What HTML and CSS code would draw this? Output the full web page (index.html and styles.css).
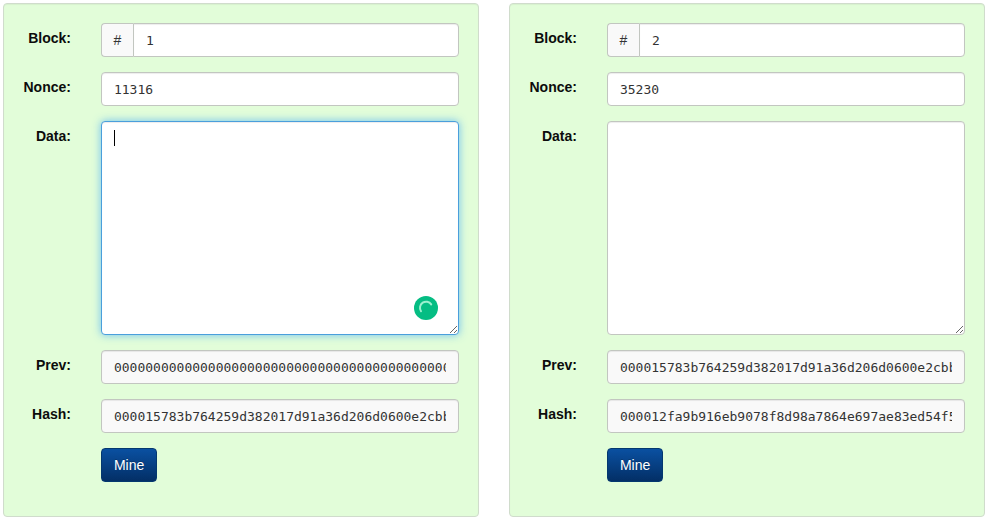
FILE: index.html
```html
<!DOCTYPE html>
<html lang="en">
<head>
  <meta charset="UTF-8">
  <meta name="viewport" content="width=device-width, initial-scale=1.0">
  <title>Blockchain</title>
  <link rel="stylesheet" href="styles.css">
</head>
<body>
  <div class="chain">
    <form class="well">
      <div class="form-group">
        <label for="block1number">Block:</label>
        <div class="field input-group">
          <span class="input-addon">#</span>
          <input id="block1number" class="form-control" type="text" value="1">
        </div>
      </div>
      <div class="form-group">
        <label for="block1nonce">Nonce:</label>
        <div class="field">
          <input id="block1nonce" class="form-control" type="text" value="11316">
        </div>
      </div>
      <div class="form-group">
        <label for="block1data">Data:</label>
        <div class="field">
          <textarea id="block1data" class="form-control active" rows="10"></textarea>
          <span class="caret"></span>
          <svg class="checker" viewBox="0 0 24 24" aria-hidden="true">
            <circle cx="12" cy="12" r="12" fill="#05bd83"/>
            <path d="M7 15.2 A6 6 0 0 1 17.2 8.4" fill="none" stroke="#9bf0cf" stroke-width="2" stroke-linecap="round"/>
          </svg>
        </div>
      </div>
      <div class="form-group">
        <label for="block1prev">Prev:</label>
        <div class="field">
          <input id="block1prev" class="form-control" type="text" readonly value="0000000000000000000000000000000000000000000000000000000000000000">
        </div>
      </div>
      <div class="form-group">
        <label for="block1hash">Hash:</label>
        <div class="field">
          <input id="block1hash" class="form-control" type="text" readonly value="000015783b764259d382017d91a36d206d0600e2cbb">
        </div>
      </div>
      <div class="form-group buttons">
        <button class="btn" type="button">Mine</button>
      </div>
    </form>

    <form class="well">
      <div class="form-group">
        <label for="block2number">Block:</label>
        <div class="field input-group">
          <span class="input-addon">#</span>
          <input id="block2number" class="form-control" type="text" value="2">
        </div>
      </div>
      <div class="form-group">
        <label for="block2nonce">Nonce:</label>
        <div class="field">
          <input id="block2nonce" class="form-control" type="text" value="35230">
        </div>
      </div>
      <div class="form-group">
        <label for="block2data">Data:</label>
        <div class="field">
          <textarea id="block2data" class="form-control" rows="10"></textarea>
        </div>
      </div>
      <div class="form-group">
        <label for="block2prev">Prev:</label>
        <div class="field">
          <input id="block2prev" class="form-control" type="text" readonly value="000015783b764259d382017d91a36d206d0600e2cbb">
        </div>
      </div>
      <div class="form-group">
        <label for="block2hash">Hash:</label>
        <div class="field">
          <input id="block2hash" class="form-control" type="text" readonly value="000012fa9b916eb9078f8d98a7864e697ae83ed54f5">
        </div>
      </div>
      <div class="form-group buttons">
        <button class="btn" type="button">Mine</button>
      </div>
    </form>
  </div>
</body>
</html>
```
FILE: styles.css
```css
* {
  box-sizing: border-box;
}

body {
  margin: 0;
  background-color: #fff;
  color: #333;
  font-family: "Liberation Sans", Arial, sans-serif;
  font-size: 14px;
  line-height: 20px;
}

.chain {
  display: flex;
  gap: 30px;
  padding: 3px 2px 3px 3px;
}

.well {
  flex: 1;
  min-width: 0;
  padding: 19px;
  background-color: #e2fdd9;
  border: 1px solid #d0dccc;
  border-radius: 4px;
  box-shadow: inset 0 1px 1px rgba(0,0,0,0.05);
}

.form-group {
  display: grid;
  grid-template-columns: 11% 1fr;
  column-gap: 30px;
  margin-bottom: 15px;
}

.form-group label {
  padding-top: 5px;
  color: #0c0c0c;
  font-weight: bold;
  text-align: right;
}

.field {
  position: relative;
  min-width: 0;
}

.form-control {
  display: block;
  width: 100%;
  height: 34px;
  padding: 6px 12px;
  color: #333;
  background-color: #fff;
  border: 1px solid #c2c6c0;
  border-radius: 4px;
  box-shadow: inset 0 1px 1px rgba(0,0,0,0.075);
  font-family: "DejaVu Sans Mono", Consolas, monospace;
  font-size: 13px;
  line-height: 20px;
  outline: none;
}

textarea.form-control {
  height: auto;
  resize: vertical;
}

.form-control[readonly] {
  background-color: #f9f9f9;
}

.form-control:focus,
.form-control.active {
  border-color: #4a9fdc;
  box-shadow: inset 0 1px 1px rgba(0,0,0,0.075), 0 0 8px rgba(82,178,246,0.8);
}

.input-group {
  display: flex;
}

.input-addon {
  width: 32px;
  padding: 6px 0;
  text-align: center;
  background-color: #f9f9f9;
  border: 1px solid #c2c6c0;
  border-right: 0;
  border-radius: 4px 0 0 4px;
}

.input-group .form-control {
  flex: 1;
  min-width: 0;
  border-radius: 0 4px 4px 0;
}

/* text cursor and spell checker badge lie over the textarea */
.caret {
  position: absolute;
  top: 9px;
  left: 13px;
  width: 1px;
  height: 16px;
  background-color: #000;
}

.checker {
  position: absolute;
  right: 21px;
  bottom: 15px;
  width: 24px;
  height: 24px;
}

.btn {
  grid-column: 2;
  justify-self: start;
  height: 34px;
  padding: 6px 12px;
  color: #fff;
  background-image: linear-gradient(#0a50a1, #032f66);
  border: 1px solid #04386f;
  border-radius: 4px;
  font-family: inherit;
  font-size: 14px;
  line-height: 20px;
  text-shadow: 0 -1px 0 rgba(0,0,0,0.2);
  cursor: pointer;
}

.btn:hover {
  background-image: linear-gradient(#084a91, #022851);
}
```
